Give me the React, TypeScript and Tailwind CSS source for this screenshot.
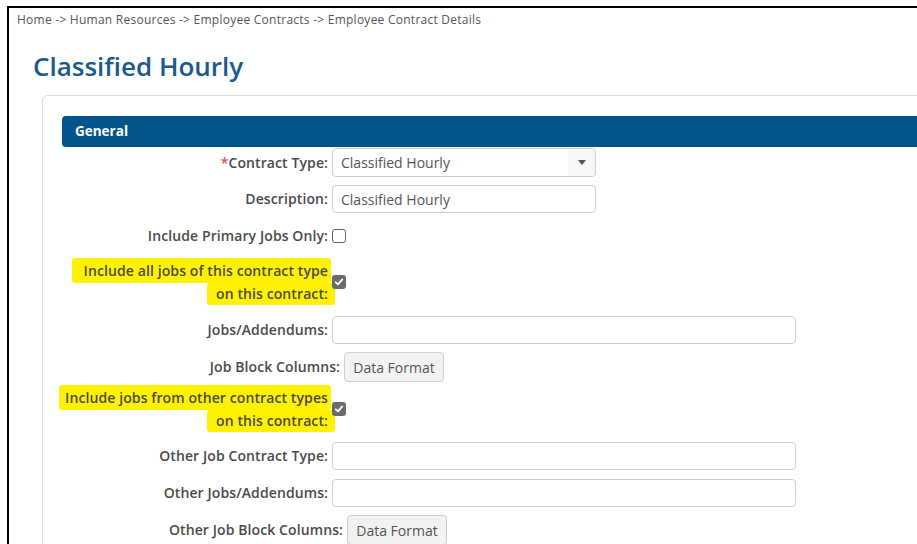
import React from 'react';

// ─── Small form pieces ─────────────────────────────────────────

const LABEL = 'text-right text-[14px] font-semibold leading-[18px] tracking-[0.1px] text-[#4a4a4a]';

function TextBox({ value = '', width }: { value?: string; width: string }) {
  return (
    <div
      className={`${width} ml-[4px] flex h-[28px] items-center rounded-[4px] border border-[#cfcfcf] bg-white px-[8px] text-[14px] text-[#555]`}
    >
      {value}
    </div>
  );
}

function SelectBox({ value }: { value: string }) {
  return (
    <div className="ml-[4px] flex h-[29px] w-[264px] items-stretch overflow-hidden rounded-[4px] border border-[#cfcfcf] bg-white text-[14px] text-[#555]">
      <div className="flex flex-1 items-center px-[8px]">{value}</div>
      <div className="flex w-[27px] items-center justify-center bg-[#f7f7f7]">
        <svg width="8" height="5" viewBox="0 0 8 5">
          <polygon points="0,0 8,0 4,5" fill="#555" />
        </svg>
      </div>
    </div>
  );
}

function CheckBox({ checked = false }: { checked?: boolean }) {
  if (!checked) {
    return <div className="ml-[4px] h-[14px] w-[14px] shrink-0 rounded-[3px] border border-[#666] bg-white" />;
  }
  return (
    <div className="ml-[4px] flex h-[14px] w-[14px] shrink-0 items-center justify-center rounded-[3px] bg-[#6b6b6b]">
      <svg width="10" height="10" viewBox="0 0 10 10">
        <path d="M1.8 5.3 L4 7.4 L8.3 2.4" fill="none" stroke="#fff" strokeWidth="1.8" strokeLinecap="round" strokeLinejoin="round" />
      </svg>
    </div>
  );
}

function DataFormatButton() {
  return (
    <button className="ml-[4px] flex h-[30px] w-[100px] items-center justify-center rounded-[4px] border border-[#cfcfcf] bg-[#f2f2f2] text-[14px] text-[#555]">
      Data Format
    </button>
  );
}

// Two-line label with marker-style highlight behind each line
function MarkedLabel({ first, second, firstPad }: { first: string; second: string; firstPad: string }) {
  return (
    <div className={`flex w-[266px] shrink-0 flex-col items-end whitespace-nowrap ${LABEL} leading-[22px]`}>
      <span className={`${firstPad} -mr-[3px] rounded-[3px] bg-[#fff200] pr-[3px] pt-[2px] pb-[1px]`}>{first}</span>
      <span className="-mr-[7px] rounded-[3px] bg-[#fff200] pl-[9px] pr-[7px]">{second}</span>
    </div>
  );
}

// ─── Page ──────────────────────────────────────────────────────

export default function App() {
  return (
    <div className="h-[544px] w-[917px] overflow-hidden bg-white pl-[7px] pt-[6px] font-['Open_Sans',sans-serif]">
      <div className="h-full overflow-hidden border-l-2 border-t-2 border-black">
        {/* Breadcrumb */}
        <div className="pl-[8px] pt-[4px] text-[12px] leading-[16px] tracking-[0.25px] text-[#555]">
          Home -&gt; Human Resources -&gt; Employee Contracts -&gt; Employee Contract Details
        </div>

        {/* Title */}
        <h1 className="ml-[24px] mt-[22px] text-[26px] font-semibold leading-[32px] text-[#1a5a8c]">Classified Hourly</h1>

        {/* Panel */}
        <div className="ml-[33px] mt-[13px] w-[900px] rounded-[5px] border border-[#dddddd] pl-[19px] pt-[20px] pb-[40px]">
          <div className="flex h-[31px] items-center rounded-l-[4px] bg-[#02548b] pl-[13px] text-[13.5px] font-bold text-white">
            General
          </div>

          <div className="flex flex-col">
            <div className="mt-[1px] flex items-center">
              <div className={`w-[266px] ${LABEL}`}>
                <span className="text-[#d9534f]">*</span>Contract Type:
              </div>
              <SelectBox value="Classified Hourly" />
            </div>

            <div className="mt-[8px] flex items-center">
              <div className={`w-[266px] ${LABEL}`}>Description:</div>
              <TextBox value="Classified Hourly" width="w-[264px]" />
            </div>

            <div className="mt-[9px] flex h-[28px] items-center">
              <div className={`w-[266px] ${LABEL}`}>Include Primary Jobs Only:</div>
              <CheckBox />
            </div>

            <div className="mt-[8px] flex items-center">
              <MarkedLabel first="Include all jobs of this contract type" second="on this contract:" firstPad="pl-[12px]" />
              <CheckBox checked />
            </div>

            <div className="mt-[11px] flex items-center">
              <div className={`w-[266px] ${LABEL}`}>Jobs/Addendums:</div>
              <TextBox width="w-[464px]" />
            </div>

            <div className="mt-[8px] flex items-center">
              <div className={`w-[278px] ${LABEL}`}>Job Block Columns:</div>
              <DataFormatButton />
            </div>

            <div className="mt-[3px] flex items-center">
              <MarkedLabel first="Include jobs from other contract types" second="on this contract:" firstPad="pl-[6px]" />
              <CheckBox checked />
            </div>

            <div className="mt-[10px] flex items-center">
              <div className={`w-[266px] ${LABEL}`}>Other Job Contract Type:</div>
              <TextBox width="w-[464px]" />
            </div>

            <div className="mt-[9px] flex items-center">
              <div className={`w-[266px] ${LABEL}`}>Other Jobs/Addendums:</div>
              <TextBox width="w-[464px]" />
            </div>

            <div className="mt-[8px] flex items-center">
              <div className={`w-[281px] ${LABEL}`}>Other Job Block Columns:</div>
              <DataFormatButton />
            </div>
          </div>
        </div>
      </div>
    </div>
  );
}
